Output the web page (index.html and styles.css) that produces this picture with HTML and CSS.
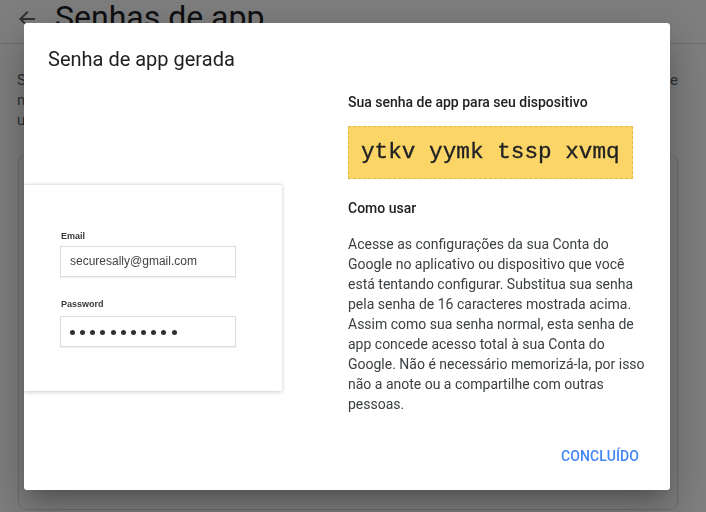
FILE: index.html
```html
<!DOCTYPE html>
<html lang="pt-BR">
<head>
<meta charset="utf-8">
<title>Senhas de app</title>
<link rel="stylesheet" href="styles.css">
</head>
<body>
<div class="page">
  <header class="topbar">
    <svg class="back" width="24" height="24" viewBox="0 0 24 24"><path d="M20 11H7.83l5.59-5.59L12 4l-8 8 8 8 1.41-1.41L7.83 13H20v-2z"/></svg>
    <h1 class="page-title">Senhas de app</h1>
  </header>
  <div class="intro">
    <div class="intro-line stretch">Senhas de app permitem que você faça login na sua Conta do Google em apps e</div>
    <div class="intro-line">no dispositivo que não são compatíveis com a verificação em duas etapas.</div>
    <div class="intro-line">uma vez e não precisa memorizar a senha.</div>
  </div>
  <div class="bg-card"></div>
</div>
<div class="scrim"></div>
<div class="dialog">
  <h2 class="dialog-title">Senha de app gerada</h2>
  <div class="dialog-body">
    <div class="illus-col">
      <div class="illus-card">
        <div class="field-label">Email</div>
        <div class="field-input">securesally@gmail.com</div>
        <div class="field-label second">Password</div>
        <div class="field-input dots">
          <span class="dot"></span><span class="dot"></span><span class="dot"></span><span class="dot"></span><span class="dot"></span><span class="dot"></span><span class="dot"></span><span class="dot"></span><span class="dot"></span><span class="dot"></span><span class="dot"></span>
        </div>
      </div>
    </div>
    <div class="info-col">
      <div class="info-heading">Sua senha de app para seu dispositivo</div>
      <div class="pw-box">ytkv yymk tssp xvmq</div>
      <div class="info-heading how">Como usar</div>
      <p class="info-text">Acesse as configurações da sua Conta do Google no aplicativo ou dispositivo que você está tentando configurar. Substitua sua senha pela senha de 16 caracteres mostrada acima. Assim como sua senha normal, esta senha de app concede acesso total à sua Conta do Google. Não é necessário memorizá-la, por isso não a anote ou a compartilhe com outras pessoas.</p>
    </div>
  </div>
  <div class="dialog-actions">
    <button class="btn-done">Concluído</button>
  </div>
</div>
</body>
</html>
```
FILE: styles.css
```css
html, body {
  margin: 0;
  padding: 0;
  width: 706px;
  height: 512px;
  overflow: hidden;
  background: #ffffff;
  font-family: Roboto, "Noto Sans", Arial, sans-serif;
}

.page {
  width: 706px;
  height: 512px;
}

.topbar {
  display: flex;
  align-items: flex-start;
  height: 44px;
  border-bottom: 1px solid #dadce0;
  padding-left: 15px;
  box-sizing: border-box;
}

.back {
  fill: #5f6368;
  margin-top: 7px;
  flex: none;
}

.page-title {
  margin: 0 0 0 16px;
  padding-top: 1px;
  font-size: 32px;
  line-height: 32px;
  font-weight: 400;
  color: #202124;
}

.intro {
  padding: 26px 28px 0 17px;
  font-size: 15px;
  line-height: 20px;
  color: #5f6368;
}

.intro-line {
  white-space: nowrap;
}

.intro-line.stretch {
  text-align: justify;
  text-align-last: justify;
}

.bg-card {
  margin: 24px 0 0 18px;
  width: 660px;
  height: 356px;
  border: 1px solid #dadce0;
  border-radius: 8px;
  box-sizing: border-box;
}

.scrim {
  position: fixed;
  inset: 0;
  background: rgba(0, 0, 0, 0.5);
}

.dialog {
  position: absolute;
  left: 24px;
  top: 23px;
  width: 646px;
  background: #ffffff;
  border-radius: 3px;
  box-shadow: 0 11px 15px -7px rgba(0,0,0,.2), 0 24px 38px 3px rgba(0,0,0,.14), 0 9px 46px 8px rgba(0,0,0,.12);
  overflow: hidden;
}

.dialog-title {
  margin: 0;
  padding: 24px 24px 0;
  font-size: 20px;
  line-height: 24px;
  font-weight: 400;
  color: #202124;
}

.dialog-body {
  display: flex;
}

.illus-col {
  width: 324px;
  flex: none;
}

.illus-card {
  margin-top: 113px;
  width: 258px;
  height: 207px;
  box-sizing: border-box;
  padding: 45px 0 0 36px;
  background: #ffffff;
  border-top: 1px solid #e6e6e6;
  box-shadow: 0 1px 4px rgba(0,0,0,.22);
  font-family: "Liberation Sans", Arial, sans-serif;
}

.field-label {
  font-size: 9px;
  line-height: 12px;
  font-weight: 700;
  color: #3a3a3a;
  margin-left: 1px;
}

.field-label.second {
  margin-top: 21px;
}

.field-input {
  margin-top: 4px;
  width: 176px;
  height: 31px;
  box-sizing: border-box;
  border: 1px solid #dddddd;
  box-shadow: 0 1px 1px rgba(0,0,0,.06);
  padding-left: 9px;
  font-size: 12px;
  line-height: 29px;
  color: #444444;
}

.field-input.dots {
  margin-top: 6px;
  display: flex;
  align-items: center;
  gap: 5.17px;
  padding-top: 1px;
}

.dot {
  width: 5px;
  height: 5px;
  border-radius: 50%;
  background: #303030;
  flex: none;
}

.info-col {
  width: 298px;
  padding-top: 21px;
}

.info-heading {
  font-size: 14px;
  line-height: 20px;
  font-weight: 500;
  color: #202124;
}

.info-heading.how {
  margin-top: 19px;
}

.pw-box {
  margin-top: 14px;
  width: 285px;
  height: 53px;
  box-sizing: border-box;
  background: #fbd667;
  border: 1px dashed #e2bb4d;
  padding-left: 12px;
  font-family: "Liberation Mono", "Courier New", monospace;
  font-size: 22.7px;
  line-height: 51px;
  color: #202124;
  white-space: nowrap;
  -webkit-text-stroke: 0.3px #202124;
}

.info-text {
  margin: 16px 0 0;
  font-size: 14px;
  line-height: 20px;
  color: #3c4043;
}

.dialog-actions {
  display: flex;
  justify-content: flex-end;
  padding: 24px 23px 16px;
}

.btn-done {
  border: none;
  background: none;
  padding: 0 8px;
  height: 36px;
  font-family: Roboto, Arial, sans-serif;
  font-size: 14px;
  font-weight: 500;
  letter-spacing: 0.1px;
  text-transform: uppercase;
  color: #4285f4;
  cursor: pointer;
}
```
